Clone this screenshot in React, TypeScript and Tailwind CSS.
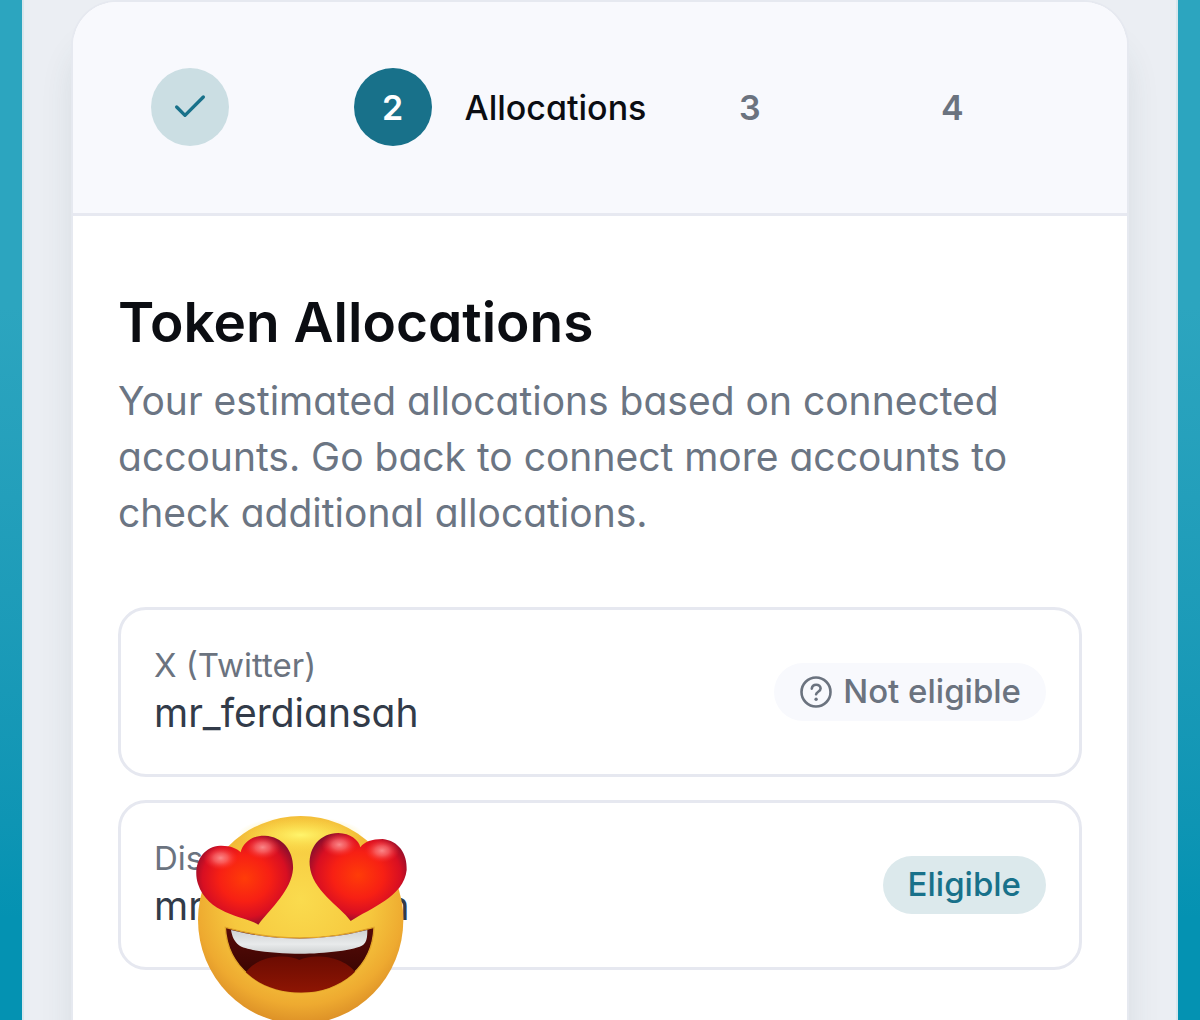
import { Check } from "lucide-react";

const steps = [
	{ id: 1, label: "Accounts", state: "done" },
	{ id: 2, label: "Allocations", state: "active" },
	{ id: 3, label: "Wallet", state: "upcoming" },
	{ id: 4, label: "Summary", state: "upcoming" },
];

const accounts = [
	{ provider: "X (Twitter)", handle: "mr_ferdiansah", eligible: false },
	{ provider: "Discord", handle: "mr.ferdiansah", eligible: true },
];

function Stepper() {
	return (
		<ol className="grid grid-cols-[203fr_358fr_203fr_136fr]">
			{steps.map((step) => (
				<li
					key={step.id}
					aria-current={step.state === "active" ? "step" : undefined}
					className="flex items-center gap-[33px]"
				>
					{step.state === "done" && (
						<span className="flex size-[78px] items-center justify-center rounded-full bg-[#cbdee3] text-[#18718a]">
							<Check className="size-10" strokeWidth={2} aria-label={step.label} />
						</span>
					)}
					{step.state === "active" && (
						<>
							<span className="flex size-[78px] items-center justify-center rounded-full bg-[#18718a] text-[34px] font-semibold text-white">
								{step.id}
							</span>
							<span className="text-[34px] font-medium text-[#0b0d12]">{step.label}</span>
						</>
					)}
					{step.state === "upcoming" && (
						<span className="flex size-[78px] items-center justify-center text-[34px] font-semibold text-[#6b737f]">
							{step.id}
						</span>
					)}
				</li>
			))}
		</ol>
	);
}

function StatusBadge({ eligible }: { eligible: boolean }) {
	if (eligible) {
		return (
			<span className="flex h-[58px] items-center rounded-full bg-[#dce9ec] px-[25px] text-[33px] font-medium text-[#18718a]">
				Eligible
			</span>
		);
	}

	return (
		<span className="flex h-[58px] items-center gap-2.5 rounded-full bg-[#f8f9fd] px-[25px] text-[33px] font-medium text-[#6b737f]">
			<svg viewBox="0 0 34 34" className="size-[34px]" fill="none" stroke="currentColor" strokeWidth="2.6" strokeLinecap="round" aria-hidden="true">
				<circle cx="17" cy="17" r="14.5" />
				<path d="M12.8 13.6C13.1 11.2 14.8 9.8 17.2 9.8C19.7 9.8 21.6 11.3 21.6 13.6C21.6 16.6 17.4 16.8 17.1 19.3" />
				<circle cx="17.1" cy="24.3" r="1.7" fill="currentColor" stroke="none" />
			</svg>
			Not eligible
		</span>
	);
}

function HeartEyes() {
	return (
		<svg viewBox="42 36 648 648" className="absolute top-[9px] left-[73px] z-10 size-[216px]" role="img" aria-label="Smiling face with heart eyes">
			<defs>
				<radialGradient id="face" cx="0.5" cy="0.4" r="0.62">
					<stop offset="0" stopColor="#fadb4e" />
					<stop offset="0.55" stopColor="#f6c83e" />
					<stop offset="0.82" stopColor="#eeaa30" />
					<stop offset="1" stopColor="#d98b25" />
				</radialGradient>
				<radialGradient id="shine" cx="0.5" cy="0.5" r="0.5">
					<stop offset="0" stopColor="#fff56c" />
					<stop offset="1" stopColor="#fbdc45" stopOpacity="0" />
				</radialGradient>
				<radialGradient id="heart" cx="0.5" cy="0.48" r="0.58">
					<stop offset="0" stopColor="#ff3c08" />
					<stop offset="0.45" stopColor="#f72014" />
					<stop offset="0.75" stopColor="#d80f22" />
					<stop offset="1" stopColor="#7c0e2e" />
				</radialGradient>
				<radialGradient id="gloss" cx="0.5" cy="0.5" r="0.5">
					<stop offset="0" stopColor="#ff9c9c" stopOpacity="0.85" />
					<stop offset="0.4" stopColor="#ff8080" stopOpacity="0.6" />
					<stop offset="1" stopColor="#ff3030" stopOpacity="0" />
				</radialGradient>
				<linearGradient id="mouth" x1="0" y1="0" x2="0" y2="1">
					<stop offset="0" stopColor="#570b08" />
					<stop offset="1" stopColor="#300300" />
				</linearGradient>
				<linearGradient id="tongue" x1="0" y1="0" x2="0" y2="1">
					<stop offset="0" stopColor="#6c0c02" />
					<stop offset="1" stopColor="#951703" />
				</linearGradient>
				<linearGradient id="teeth" x1="0" y1="0" x2="0" y2="1">
					<stop offset="0" stopColor="#cfd2d3" />
					<stop offset="0.6" stopColor="#e8eaeb" />
					<stop offset="1" stopColor="#cdd0d1" />
				</linearGradient>
				<clipPath id="mouth-clip">
					<path d="M136 382 Q360 446 582 382 C578 500 482 578 364 578 C242 578 142 502 136 382Z" />
				</clipPath>
			</defs>
			<ellipse cx="362" cy="360" rx="308" ry="312" fill="url(#face)" />
			<ellipse cx="362" cy="105" rx="190" ry="56" fill="url(#shine)" />
			<path d="M136 382 Q360 446 582 382 C578 500 482 578 364 578 C242 578 142 502 136 382Z" fill="url(#mouth)" stroke="#e0a32a" strokeWidth="4" />
			<g clipPath="url(#mouth-clip)">
				<path d="M190 530 C220 466 320 460 358 480 C400 460 500 466 535 530 L500 600 L220 600Z" fill="url(#tongue)" />
			</g>
			<path d="M153 390 Q360 442 562 390 C562 412 560 426 550 434 C530 450 430 461 362 461 C290 461 196 452 177 436 C162 424 156 408 153 390Z" fill="url(#teeth)" />
			<path d="M235 374 C200 350 84 345 54 252 C36 196 66 140 120 137 C150 136 172 145 182 157 C188 130 215 106 255 107 C310 110 342 155 339 208 C334 270 276 322 235 374Z" fill="url(#heart)" />
			<ellipse cx="122" cy="174" rx="52" ry="36" fill="url(#gloss)" />
			<ellipse cx="248" cy="142" rx="54" ry="36" fill="url(#gloss)" />
			<path d="M512 363 C480 318 395 272 389 195 C387 140 420 100 475 99 C510 100 537 120 541 142 C553 125 575 117 608 117 C655 122 682 160 680 210 C672 290 570 325 512 363Z" fill="url(#heart)" />
			<ellipse cx="478" cy="134" rx="54" ry="36" fill="url(#gloss)" />
			<ellipse cx="606" cy="152" rx="52" ry="36" fill="url(#gloss)" />
		</svg>
	);
}

export default function App() {
	return (
		<div className="flex h-screen overflow-hidden bg-linear-to-b from-[#2ca5bf] from-30% to-[#0492b2] to-90% px-[22px] font-['Inter',sans-serif] [font-feature-settings:'cv11']">
			<div className="flex flex-1 border-x-2 border-[#d8e6ec] bg-[#ebeef3] px-[47px]">
				<main className="flex-1 rounded-t-[46px] border-2 border-b-0 border-[#e6e9f0] bg-white shadow-[0_40px_32px_0_rgba(50,75,80,0.1)]">
					<header className="rounded-t-[44px] border-b-3 border-[#e7e9f1] bg-[#f8f9fd] px-[78px] pt-[66px] pb-[67px]">
						<Stepper />
					</header>
					<section className="px-[45px] pt-[72px]">
						<h1 className="text-[55px] leading-[68px] font-semibold text-[#0b0d12]">Token Allocations</h1>
						<p className="mt-[17px] text-[39px] leading-[56px] text-[#6b7583]">
							Your estimated allocations based on connected accounts. Go back to connect more accounts to check additional allocations.
						</p>
						<ul className="mt-[66px] flex flex-col gap-[23px]">
							{accounts.map((account) => (
								<li
									key={account.provider}
									className="relative flex h-[170px] items-center justify-between rounded-[28px] border-3 border-[#e6e8f0] px-[33px]"
								>
									<div className="pb-1.5">
										<p className="text-[33px] leading-[48px] text-[#6b737f]">{account.provider}</p>
										<p className="text-[39px] leading-[48px] text-[#323b49]">{account.handle}</p>
									</div>
									<StatusBadge eligible={account.eligible} />
									{account.eligible && <HeartEyes />}
								</li>
							))}
						</ul>
					</section>
				</main>
			</div>
		</div>
	);
}
